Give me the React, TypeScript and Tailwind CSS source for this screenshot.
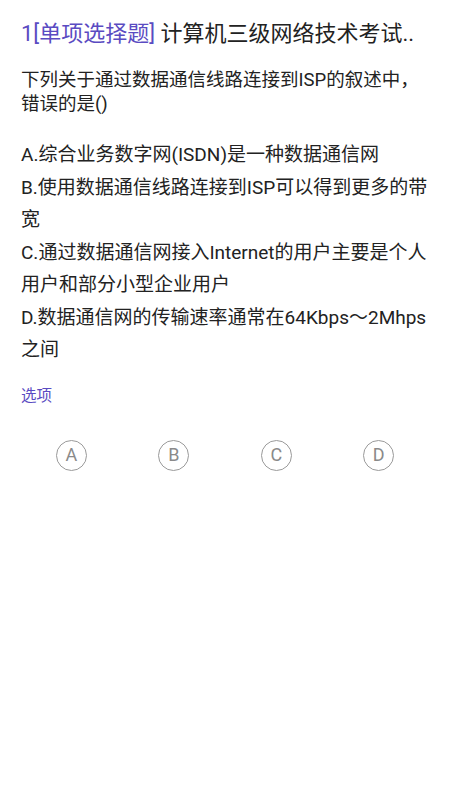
import React from "react";

const font = { fontFamily: "Roboto, 'Noto Sans CJK SC', 'Noto Sans', sans-serif" };

export default function App() {
  const options = [
    "A.综合业务数字网(ISDN)是一种数据通信网",
    "B.使用数据通信线路连接到ISP可以得到更多的带宽",
    "C.通过数据通信网接入Internet的用户主要是个人用户和部分小型企业用户",
    "D.数据通信网的传输速率通常在64Kbps～2Mhps之间",
  ];
  return (
    <div className="w-[450px] h-[800px] bg-white text-[#222]" style={font}>
      <div className="pl-[21px] pr-[16px] pt-[20px]">
        <div className="text-[22px] leading-[28px] whitespace-nowrap">
          <span className="text-[#5a4bc2]">1[单项选择题]</span>
          <span> 计算机三级网络技术考试..</span>
        </div>
        <div className="mt-[20px] text-[18.5px] leading-[24px]">
          下列关于通过数据通信线路连接到ISP的叙述中，错误的是()
        </div>
        <div className="mt-[23px] text-[19px] leading-[32.5px] flex flex-col">
          {options.map((o) => (
            <div key={o}>{o}</div>
          ))}
        </div>
        <div className="mt-[18px] text-[15.5px] leading-[22px] text-[#5a4bc2]">选项</div>
      </div>
      <div className="mt-[33px] px-[20px] grid grid-cols-4">
        {["A", "B", "C", "D"].map((l) => (
          <div key={l} className="flex justify-center">
            <div className="w-[31px] h-[31px] rounded-full border border-[#9a9a9a] flex items-center justify-center text-[18px] text-[#8a8a8a] leading-none">
              {l}
            </div>
          </div>
        ))}
      </div>
    </div>
  );
}
